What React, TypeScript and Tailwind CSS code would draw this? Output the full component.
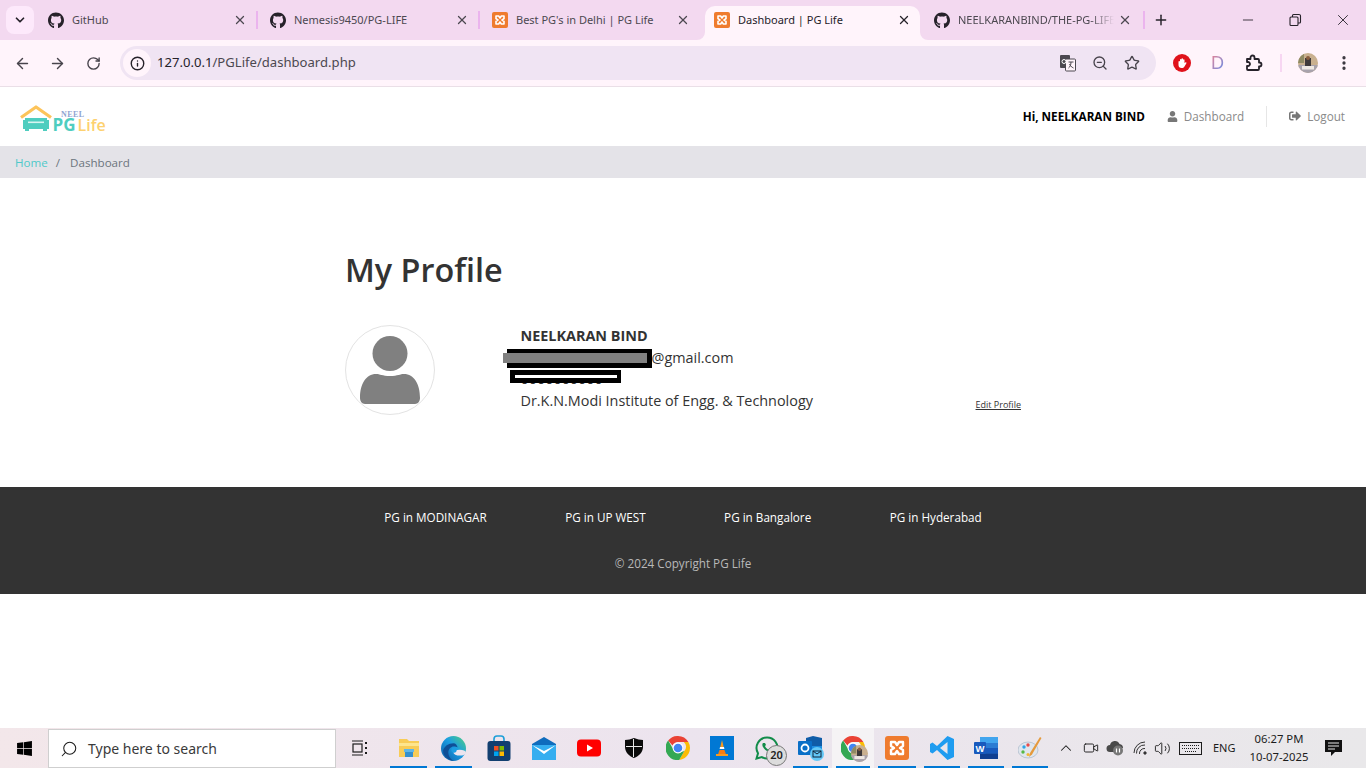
import React from "react";
import { ArrowLeft, ArrowRight, RotateCw, Info, ZoomOut, Star, EllipsisVertical, Plus, X, Minus, ChevronDown, ChevronUp, Search, Volume2, Video } from "lucide-react";
import { FaGithub, FaUser, FaSignOutAlt, FaWindows } from "react-icons/fa";

const Xampp = ({ s = 16 }: { s?: number }) => (
  <svg width={s} height={s} viewBox="0 0 24 24">
    <rect x="0" y="0" width="24" height="24" rx="3" fill="#ef7b2e" />
    <path d="M6 6h4l2 3 2-3h4v4l-3 2 3 2v4h-4l-2-3-2 3H6v-4l3-2-3-2z" fill="none" stroke="#fff" strokeWidth="2.4" strokeLinejoin="round" />
  </svg>
);

const Chrome = ({ s = 24 }: { s?: number }) => (
  <svg width={s} height={s} viewBox="4 4 40 40">
    <path d="M24 4a20 20 0 0 1 17.3 10H24a10 10 0 0 0-9.2 6L7.6 11.7A20 20 0 0 1 24 4z" fill="#ea4335" />
    <path d="M41.3 14A20 20 0 0 1 26 43.9l8.600-15a10 10 0 0 0-1-14.900z" fill="#fbbc04" />
    <path d="M26 43.900A20 20 0 0 1 7.600 11.700l8.700 15a10 10 0 0 0 9.700 5.100l8.600-2.900z" fill="#34a853" />
    <circle cx="24" cy="24" r="9" fill="#fff" />
    <circle cx="24" cy="24" r="7.200" fill="#4285f4" />
  </svg>
);

const Avatar = ({ s = 20 }: { s?: number }) => (
  <svg width={s} height={s} viewBox="0 0 20 20">
    <clipPath id="av"><circle cx="10" cy="10" r="10" /></clipPath>
    <g clipPath="url(#av)">
      <rect width="20" height="20" fill="#c9b08f" />
      <rect x="0" y="0" width="6" height="10" fill="#8f8a63" />
      <rect x="0" y="12" width="20" height="8" fill="#a8a2ac" />
      <rect x="7" y="5" width="6" height="8" fill="#3f3a3a" />
      <circle cx="10" cy="5" r="2" fill="#8a5d3f" />
      <rect x="4" y="13" width="12" height="3.500" fill="#eee8e3" />
    </g>
  </svg>
);

function Tab({ title, icon, active, w = 220, fade, pr = "pr-[9px]", extra = "" }: { title: string; icon: React.ReactNode; active?: boolean; w?: number; fade?: boolean; pr?: string; extra?: string }) {
  return (
    <div className={`relative flex items-center h-[34px] pb-[6px] pl-[12px] shrink-0 ${pr} ${extra}`} style={{ width: w }}>
      {active && (
        <>
          <div className="absolute left-[3px] right-[4px] top-0 bottom-0 bg-[#fff4fb] rounded-t-[10px]" />
          <svg className="absolute left-[-5px] bottom-0" width="8" height="8" viewBox="0 0 8 8"><path d="M8 0v8H0a8 8 0 0 0 8-8z" fill="#fff4fb" /></svg>
          <svg className="absolute right-[-4px] bottom-0" width="8" height="8" viewBox="0 0 8 8"><path d="M0 0v8h8a8 8 0 0 1-8-8z" fill="#fff4fb" /></svg>
        </>
      )}
      <span className="relative shrink-0 w-4 h-4 flex items-center justify-center">{icon}</span>
      <span className={`relative ml-2 flex-1 overflow-hidden whitespace-nowrap text-[11px] ${active ? "text-[#26222a]" : "text-[#4c4850]"} ${fade ? "[mask-image:linear-gradient(to_right,black_85%,transparent)]" : ""}`}>{title}</span>
      <X className={`relative shrink-0 ml-1 ${active ? "text-[#26222a]" : "text-[#4c4850]"}`} size={14} strokeWidth={2.2} />
    </div>
  );
}

const Sep = () => <div className="w-[2px] h-[18px] bg-[#ebb4ee] shrink-0" />;

function TaskItem({ children, bar, active, w = 44.5 }: { children: React.ReactNode; bar?: boolean; active?: boolean; w?: number }) {
  return (
    <div className={`relative h-10 flex items-center justify-center shrink-0 ${active ? "bg-[#f5f3f5]" : ""}`} style={{ width: w }}>
      {children}
      {bar && <div className="absolute left-[4px] right-[4px] bottom-0 h-[2px] bg-[#0078d4]" />}
    </div>
  );
}

export default function App() {
  return (
    <div className="w-[1366px] h-screen overflow-hidden flex flex-col bg-white font-['Open_Sans',sans-serif] text-[#333]">
      {/* Browser tab strip */}
      <div className="h-10 bg-[#f3d9f0] flex items-end shrink-0 font-['Noto_Sans',sans-serif] relative">
        <div className="self-start mt-[6px] ml-[6px] w-[28px] h-[28px] rounded-lg bg-[#fde9fb] flex items-center justify-center shrink-0">
          <ChevronDown size={14} strokeWidth={3} className="text-[#26222a]" />
        </div>
        <div className="w-[2px] shrink-0" />
        <Tab title="GitHub" icon={<FaGithub size={17} className="text-[#26222a]" />} />
        <div className="self-center mb-[-1px] -mt-[1px]"><Sep /></div>
        <Tab title="Nemesis9450/PG-LIFE" icon={<FaGithub size={17} className="text-[#26222a]" />} />
        <div className="self-center mb-[-1px] -mt-[1px]"><Sep /></div>
        <Tab title="Best PG's in Delhi | PG Life" w={222} pr="pr-[12px]" icon={<Xampp />} />
        <Tab active title="Dashboard | PG Life" w={222} pr="pr-[13px]" icon={<Xampp />} />
        <Tab fade w={221} pr="pr-[11px]" extra="-ml-[2px]" title="NEELKARANBIND/THE-PG-LIFE" icon={<FaGithub size={17} className="text-[#26222a]" />} />
        <div className="self-center mb-[-1px] -mt-[1px]"><Sep /></div>
        <Plus size={16} strokeWidth={2.2} className="self-center ml-[8px] text-[#26222a]" />
        <div className="ml-auto self-stretch flex items-center pr-[14px] gap-[32px] text-[#26222a]">
          <Minus size={16} strokeWidth={1.3} />
          <svg width="14" height="14" viewBox="0 0 14 14" fill="none" stroke="currentColor" strokeWidth="1.100"><rect x="2" y="4" width="8" height="8.500" rx="1" /><path d="M4.500 4V2.500a1 1 0 0 1 1-1H11a1.500 1.500 0 0 1 1.500 1.500V9a1 1 0 0 1-1 1H10" /></svg>
          <X size={18} strokeWidth={1.200} />
        </div>
      </div>

      {/* Toolbar */}
      <div className="h-[47px] bg-[#fff4fb] border-b border-[#eadfe7] shrink-0 flex items-center pl-[14px] pr-[13px] text-[#47434b] font-['Noto_Sans',sans-serif]">
        <ArrowLeft size={17} strokeWidth={2} />
        <ArrowRight size={17} strokeWidth={2} className="ml-[18px]" />
        <RotateCw size={15} strokeWidth={2.200} className="ml-[20px]" />
        <div className="ml-[19px] w-[1036px] h-[34px] rounded-full bg-[#f0e4f3] flex items-center pl-[3px] pr-[16px]">
          <div className="w-[28px] h-[28px] rounded-full bg-[#fff4fb] flex items-center justify-center shrink-0">
            <Info size={15} strokeWidth={2.200} className="text-[#26222a]" />
          </div>
          <span className="ml-[6px] text-[13.1px] text-[#26222a]">127.0.0.1<span className="text-[#4c4850]">/PGLife/dashboard.php</span></span>
          <div className="ml-auto flex items-center">
            <svg width="18" height="18" viewBox="0 0 17 18"><rect x="0.500" y="1" width="10" height="13" rx="1" fill="#4c4850" /><rect x="6" y="5" width="10" height="12" rx="1" fill="#fff4fb" stroke="#4c4850" /><path d="M9 8h5M11.500 8c0 3-1 5-2.500 6M10 10c1 2 2 3 4 4" stroke="#4c4850" fill="none" /><circle cx="4.500" cy="7.500" r="2" fill="none" stroke="#fff" /></svg>
            <ZoomOut size={16} strokeWidth={2} className="ml-[15px]" />
            <Star size={16} strokeWidth={2} className="ml-[16px]" />
          </div>
        </div>
        <svg className="ml-[17px] shrink-0" width="18" height="18" viewBox="0 0 18 18"><circle cx="9" cy="9" r="9" fill="#e0121b" /><path d="M5.500 10V7.500a.8.8 0 0 1 1.500 0V5.500a.8.8 0 0 1 1.500 0V4.800a.8.8 0 0 1 1.500 0v.9a.8.8 0 0 1 1.500 0v3.300l.8-.6c.8-.4 1.400.3 1 1l-2 3.300c-.5.8-1.300 1.300-2.300 1.300H8.500c-1.800 0-3-1.300-3-3z" fill="#fff" /></svg>
        <span className="ml-[20px] w-[14px] text-[18px] leading-none font-['Liberation_Sans',sans-serif] bg-gradient-to-br from-[#e9808f] to-[#4a86ee] bg-clip-text text-transparent">D</span>
        <svg className="ml-[20px] shrink-0" width="18" height="18" viewBox="0 0 18 18" fill="none" stroke="#26222a" strokeWidth="1.800" strokeLinejoin="round"><path d="M2 5h3.500V3.500a2 2 0 0 1 4 0V5H13a1 1 0 0 1 1 1v2.500h.5a2 2 0 0 1 0 4H14V15a1 1 0 0 1-1 1H3a1 1 0 0 1-1-1v-3h1a2 2 0 0 0 0-4H2z" /></svg>
        <div className="w-[2px] h-[18px] bg-[#f7d6f2] ml-[17px] shrink-0" />
        <span className="ml-[16px] shrink-0"><Avatar /></span>
        <EllipsisVertical size={18} strokeWidth={2.400} className="ml-[17px] text-[#3a363e] shrink-0" />
      </div>

      {/* Site navbar */}
      <nav className="h-[59px] shrink-0 flex items-center pl-[20px] pr-[21px]">
        <svg width="86" height="28" viewBox="0 0 86 28" className="mt-[4px] overflow-visible" role="img" aria-label="logo">
          <path d="M1 12.500 16 2l15 10.500" fill="none" stroke="#fdc45a" strokeWidth="3.200" strokeLinejoin="round" />
          <path d="M3 15h2v-2h22v2h2v9h-2v2h-4v-2H9v2H5v-2H3z" fill="#4fcdbf" />
          <rect x="8" y="16.500" width="16" height="1.600" fill="#d8f5f1" />
          <text x="41" y="11.500" fontFamily="'Liberation Serif',serif" fontWeight="700" fontSize="8" letterSpacing="0.400" fill="#8fa4d2">NEEL</text>
          <text x="32.500" y="25.500" fontFamily="'Open Sans',sans-serif" fontWeight="700" fontSize="17" fill="#4fcdbf">PG</text>
          <text x="57.500" y="25.500" fontFamily="'Open Sans',sans-serif" fontWeight="600" fontSize="16" fill="#fdd16f">Life</text>
        </svg>
        <div className="ml-auto flex items-center text-[11.7px]">
          <span className="font-bold text-black">Hi, NEELKARAN BIND</span>
          <span className="ml-[22px] flex items-center text-[#8a8a8a]"><FaUser size={11} className="text-[#777]" /><span className="ml-[6px]">Dashboard</span></span>
          <div className="w-px h-[21px] bg-[#e6e6e6] ml-[22px]" />
          <span className="ml-[22px] flex items-center text-[#8a8a8a]"><FaSignOutAlt size={12} className="text-[#777]" /><span className="ml-[6px]">Logout</span></span>
        </div>
      </nav>

      {/* Breadcrumb */}
      <div className="h-[32px] pt-[1px] bg-[#e4e3e8] shrink-0 flex items-center pl-[15px] text-[11.6px]">
        <span className="text-[#4fc9c9]">Home</span>
        <span className="ml-[8px] text-[#6c757d]">/</span>
        <span className="ml-[10px] text-[#6c757d]">Dashboard</span>
      </div>

      {/* Profile */}
      <main className="w-[676px] mx-auto shrink-0 pt-[72px] pb-[72px]">
        <h1 className="text-[32.4px] leading-[38px] font-semibold text-[#333]">My Profile</h1>
        <div className="flex mt-[37px] h-[90px]">
          <div className="w-[90px] h-[90px] rounded-full border border-[#e3e3e3] flex items-center justify-center shrink-0">
            <svg width="60" height="68" viewBox="0 0 60 68" fill="#808080">
              <circle cx="30" cy="17.500" r="17.500" />
              <path d="M0 62c0-14 6-24 16-24 4 0 6 2 14 2s10-2 14-2c10 0 16 10 16 24 0 3-2 6-5 6H5c-3 0-5-3-5-6z" />
            </svg>
          </div>
          <div className="ml-[85.5px] text-[14.4px] leading-[21.5px] text-[#333]">
            <div className="font-bold">NEELKARAN BIND</div>
            <div className="relative">
              <span className="inline-block w-[131px]" />@gmail.com
              <div className="absolute left-[-13.5px] top-[2px] w-[145px] h-[19px] bg-black" />
              <div className="absolute left-[-17.5px] top-[6px] w-[144px] h-[10px] bg-[#808080]" />
            </div>
            <div className="relative">
              <span>0000000000</span>
              <div className="absolute left-[-10.5px] top-[2px] w-[111px] h-[13px] bg-black" />
              <div className="absolute left-[-5.5px] top-[7px] w-[102px] h-[3px] bg-white" />
            </div>
            <div>Dr.K.N.Modi Institute of Engg. &amp; Technology</div>
          </div>
          <span className="ml-auto self-end mb-[4px] text-[9px] leading-[12px] underline text-[#333]">Edit Profile</span>
        </div>
      </main>

      {/* Footer */}
      <footer className="h-[107px] bg-[#333] shrink-0 flex flex-col items-center text-[11.7px]">
        <div className="flex gap-[78.5px] mt-[22px] text-white leading-[17px]">
          <span>PG in MODINAGAR</span>
          <span>PG in UP WEST</span>
          <span>PG in Bangalore</span>
          <span>PG in Hyderabad</span>
        </div>
        <div className="mt-[29px] text-[#b9b9b9] leading-[17px]">© 2024 Copyright PG Life</div>
      </footer>

      <div className="flex-1" />

      {/* Windows taskbar */}
      <div className="h-10 shrink-0 flex items-center bg-gradient-to-r from-[#f3e7ea] via-[#ece4ee] to-[#e9e8ea] text-[#1c1c1c] font-['Noto_Sans',sans-serif]">
        <div className="w-[48px] flex justify-center shrink-0"><FaWindows size={17} className="text-black" /></div>
        <div className="w-[288px] h-[39px] mt-[1px] bg-white border border-[#cfcfcf] flex items-center pl-[11px] shrink-0">
          <Search size={18} strokeWidth={1.400} className="-scale-x-100" />
          <span className="ml-[10px] text-[14px] text-[#3a3a3a]">Type here to search</span>
        </div>
        <div className="w-[2px] shrink-0" />
        <TaskItem>
          <svg width="18" height="16" viewBox="0 0 18 16" fill="none" stroke="#1c1c1c" strokeWidth="1.200"><path d="M1 1h11M1 15h11" /><rect x="2" y="4" width="9" height="8" /><path d="M15 2v2M15 7v2M15 12v2" strokeWidth="2" /></svg>
        </TaskItem>
        <div className="w-[3.5px] shrink-0" />
        <TaskItem bar w={45}>
          <svg width="22" height="20" viewBox="0 0 22 20"><path d="M1 1h8l2 2h10v16H1z" fill="#f8cc57" /><path d="M1 5h20v3H1z" fill="#fde58e" /><path d="M7 13h8v6H7z" fill="#3490cf" /><path d="M6 11h10v3H6z" fill="#5fb6e8" /></svg>
        </TaskItem>
        <TaskItem bar w={45}>
          <svg width="25" height="25" viewBox="0 0 24 24">
            <defs><linearGradient id="edgeg" x1="0" y1="1" x2="1" y2="0"><stop offset="0" stopColor="#0c59a4" /><stop offset="0.55" stopColor="#1b9de2" /><stop offset="1" stopColor="#52d17c" /></linearGradient></defs>
            <circle cx="12" cy="12" r="12" fill="url(#edgeg)" />
            <path d="M12 7c-5 0-9 3-10 7 0 5 4 9 10 10-3-2-5-5-5-8 0-4 3-6 5-6 2 0 3 0 4 1-.5-2-2-4-4-4z" fill="#0f4f96" />
            <ellipse cx="18" cy="16" rx="6" ry="2.800" fill="#ebe4ee" />
            <circle cx="12.500" cy="13.500" r="2.500" fill="#1b9de2" />
          </svg>
        </TaskItem>
        <TaskItem w={45}>
          <svg width="24" height="26" viewBox="0 0 24 26"><path d="M7 7V4a3 3 0 0 1 3-3h4a3 3 0 0 1 3 3v3" fill="none" stroke="#1d9fd8" strokeWidth="1.600" /><rect x="0.500" y="6" width="23" height="20" rx="3" fill="#123f70" /><rect x="7" y="11" width="4.500" height="4.500" fill="#f25022" /><rect x="12.500" y="11" width="4.500" height="4.500" fill="#7fba00" /><rect x="7" y="16.500" width="4.500" height="4.500" fill="#00a4ef" /><rect x="12.500" y="16.500" width="4.500" height="4.500" fill="#ffb900" /></svg>
        </TaskItem>
        <TaskItem w={46}>
          <svg width="24" height="23" viewBox="0 0 24 23"><path d="M0 7 12 0l12 7v16H0z" fill="#0f6cbd" /><path d="M0 8h24v15H0z" fill="#35aef0" /><path d="M0 8l12 9 12-9-12 6z" fill="#fff" /></svg>
        </TaskItem>
        <TaskItem>
          <svg width="24" height="18" viewBox="0 0 24 18"><rect width="24" height="17" y="0.500" rx="4" fill="#f00" /><path d="M10 5.500v7l6-3.500z" fill="#fff" /></svg>
        </TaskItem>
        <TaskItem>
          <svg width="18" height="20" viewBox="0 0 18 20"><path d="M9 0c3 1 6 2 9 2v7c0 5-4 9-9 11C4 18 0 14 0 9V2c3 0 6-1 9-2z" fill="#0b0b0b" /><path d="M8.500 1v18M1 8.500h16" stroke="#e8e8e8" strokeWidth="1" /></svg>
        </TaskItem>
        <TaskItem w={44}><Chrome /></TaskItem>
        <TaskItem w={44}>
          <svg width="24" height="24" viewBox="0 0 24 24"><rect width="24" height="24" fill="#0078d4" /><path d="M12 4l2.200 9H9.800z" fill="#f79a1e" /><path d="M9.500 14h5l1.500 4.500H8z" fill="#f57c12" /><path d="M10 11h4l.4 2H9.600z" fill="#fff" /><path d="M6 18h12v2H6z" fill="#f79a1e" /></svg>
        </TaskItem>
        <TaskItem w={45}>
          <svg width="24" height="24" viewBox="0 0 24 24" fill="none"><path d="M12 1.500a10.500 10.500 0 0 0-9 15.800L1.500 22.500l5.400-1.400A10.500 10.500 0 1 0 12 1.500z" stroke="#128c4a" strokeWidth="2" /><path d="M8 7c-1 1-1 3 1 5.500s5 4 6.500 3.500c1-.3 1.500-1 1.500-2l-2.500-1.500-1 1c-1 0-3-2-3.500-3.500l1-1L10 7z" fill="#128c4a" /></svg>
          <span className="absolute left-[22px] top-[17px] w-[21px] h-[21px] rounded-full bg-[#dcdcdc] border border-[#777] flex items-center justify-center text-[11px] font-semibold text-[#222]">20</span>
        </TaskItem>
        <TaskItem bar w={43}>
          <svg width="26" height="26" viewBox="0 0 26 26"><rect x="8" y="3" width="16" height="15" fill="#1c8de0" /><path d="M8 3l7-2 9 2v8H8z" fill="#0f5ca8" /><rect x="0" y="6" width="14" height="14" rx="1" fill="#0a6fc7" /><circle cx="7" cy="13" r="3.500" fill="none" stroke="#fff" strokeWidth="1.800" /><circle cx="19" cy="19" r="7" fill="#63c8f7" /><rect x="15" y="16" width="8" height="6" fill="none" stroke="#10243a" strokeWidth="1" /><path d="M15 16l4 3 4-3" fill="none" stroke="#10243a" strokeWidth="1" /></svg>
        </TaskItem>
        <TaskItem bar active w={42}>
          <Chrome />
          <span className="absolute left-[19px] top-[17px]"><Avatar s={17} /></span>
        </TaskItem>
        <TaskItem bar w={46}><Xampp s={24} /></TaskItem>
        <TaskItem bar w={44}>
          <svg width="24" height="24" viewBox="0 0 24 24"><path d="M17.500 0 24 3v18l-6.500 3L7 14l-4.500 3.500L0 16V8l2.500-1.500L7 10z" fill="#1f9cf0" /><path d="M17.500 6 10 12l7.500 6z" fill="#e9e5ec" /></svg>
        </TaskItem>
        <TaskItem bar w={44}>
          <svg width="24" height="22" viewBox="0 0 24 22"><rect x="6" y="0" width="18" height="22" rx="1.500" fill="#2b7cd3" /><rect x="6" y="0" width="18" height="6" fill="#41a5ee" /><rect x="6" y="11" width="18" height="5.500" fill="#185abd" /><rect x="6" y="16.500" width="18" height="5.500" fill="#103f91" /><rect x="0" y="5" width="12" height="12" rx="1" fill="#185abd" /><text x="6" y="14.500" textAnchor="middle" fontSize="9.500" fontWeight="700" fill="#fff" fontFamily="'Liberation Sans',sans-serif">W</text></svg>
        </TaskItem>
        <TaskItem bar w={44}>
          <svg width="24" height="24" viewBox="0 0 24 24"><ellipse cx="10" cy="14" rx="10" ry="8" fill="#dfe6ee" stroke="#9fb0c2" strokeWidth="0.600" /><circle cx="6" cy="11" r="1.700" fill="#2fa4e7" /><circle cx="10" cy="9" r="1.700" fill="#e94b4b" /><circle cx="5" cy="16" r="1.700" fill="#57b947" /><circle cx="10" cy="18.500" r="1.500" fill="#f2b632" /><path d="M22 1 12 17l-1 4 3-2.500L23.500 2z" fill="#e59a3c" /></svg>
        </TaskItem>
        <div className="ml-auto flex items-center h-10 text-[#1c1c1c]">
          <ChevronUp size={18} strokeWidth={1.400} />
          <Video size={16} strokeWidth={1.400} className="ml-[8px]" />
          <svg className="ml-[7px]" width="18" height="16" viewBox="0 0 18 16"><path d="M4 12a3.500 3.500 0 0 1 0-7 5 5 0 0 1 9.500-1A4 4 0 0 1 17 8h-6v4z" fill="#4a4a4a" /><circle cx="12" cy="10.500" r="5" fill="#777" /><path d="M10.500 8.500v4M13.500 8.500v4" stroke="#fff" strokeWidth="1.200" /></svg>
          <svg className="ml-[9px]" width="16" height="14" viewBox="0 0 16 14" fill="none" stroke="#333" strokeWidth="1"><path d="M1 12a11 11 0 0 1 11-11M3.500 12.500a8 8 0 0 1 8.500-8.500M6.500 13a5 5 0 0 1 5.500-5.500" /><circle cx="12" cy="12" r="1.200" fill="#333" /></svg>
          <Volume2 size={17} strokeWidth={1.300} className="ml-[5px]" />
          <svg className="ml-[8px]" width="23" height="13" viewBox="0 0 23 13" fill="none" stroke="#1c1c1c"><rect x="0.500" y="0.500" width="22" height="12" /><path d="M3 3.500h17M3 6.500h17M6 9.500h11" strokeDasharray="1 1" /></svg>
          <span className="ml-[11px] text-[11px] w-[26px]">ENG</span>
          <div className="ml-[7px] w-[66px] text-center text-[11.3px] leading-[18px]">
            <div>06:27 PM</div>
            <div>10-07-2025</div>
          </div>
          <div className="w-[40px] ml-[1px] mr-[13px] flex justify-center">
            <svg width="17" height="16" viewBox="0 0 17 16"><path d="M0 0h17v12h-7l-4 4v-4H0z" fill="#111" /><path d="M3 3h11M3 6h11M3 9h7" stroke="#fff" strokeWidth="0.900" /></svg>
          </div>
        </div>
      </div>
    </div>
  );
}
